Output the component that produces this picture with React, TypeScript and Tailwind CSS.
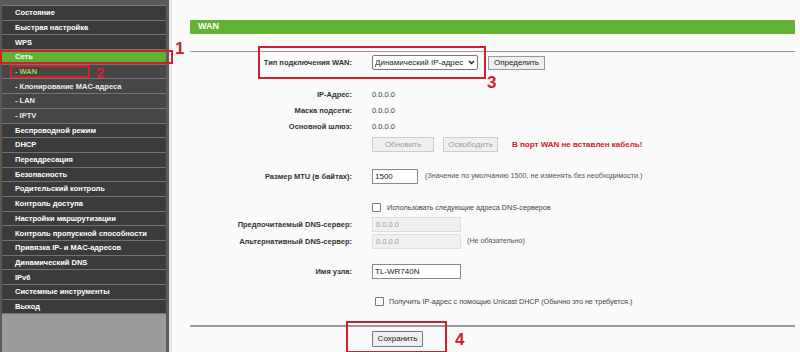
import React from "react";

const menu: { t: string; sub?: boolean; active?: boolean; sel?: boolean }[] = [
  { t: "Состояние" },
  { t: "Быстрая настройка" },
  { t: "WPS" },
  { t: "Сеть", active: true },
  { t: "- WAN", sub: true, sel: true },
  { t: "- Клонирование MAC-адреса", sub: true },
  { t: "- LAN", sub: true },
  { t: "- IPTV", sub: true },
  { t: "Беспроводной режим" },
  { t: "DHCP" },
  { t: "Переадресация" },
  { t: "Безопасность" },
  { t: "Родительский контроль" },
  { t: "Контроль доступа" },
  { t: "Настройки маршрутизации" },
  { t: "Контроль пропускной способности" },
  { t: "Привязка IP- и MAC-адресов" },
  { t: "Динамический DNS" },
  { t: "IPv6" },
  { t: "Системные инструменты" },
  { t: "Выход" },
];

function Row({ label, h, mt, children }: { label?: string; h: string; mt: string; children?: React.ReactNode }) {
  return (
    <div className={`flex items-center ${h} ${mt}`}>
      <div className="w-[162px] text-right font-bold text-[7.5px] text-[#333] shrink-0 whitespace-nowrap">{label}</div>
      <div className="pl-[20px] flex items-center text-[7.5px] text-[#444] whitespace-nowrap">{children}</div>
    </div>
  );
}

export default function App() {
  return (
    <div className="relative w-[800px] h-[352px] flex bg-[#fafafa] overflow-hidden" style={{ fontFamily: '"Liberation Sans", Arial, sans-serif' }}>
      {/* SIDEBAR */}
      <div className="w-[166px] shrink-0 flex flex-col bg-[#9b9b9b] border-l-2 border-[#5a5a5a]">
        <div className="h-[6px] bg-[#5a5a5a] border-b border-[#7a7a7a]"></div>
        {menu.map((m) => (
          <div
            key={m.t}
            className={`h-[14.7px] shrink-0 flex items-center pl-[13px] border-b border-[#747474] text-[7.5px] font-bold whitespace-nowrap ${
              m.active ? "bg-[#5db333] text-white" : m.sub ? "bg-[#464646]" : "bg-[#3b3b3b] text-white"
            } ${m.sel ? "text-[#9ad35a]" : m.sub ? "text-[#ececec]" : ""}`}
          >
            {m.t}
          </div>
        ))}
        <div className="flex-1"></div>
      </div>
      <div className="w-[3px] shrink-0 bg-[#5c5c5c]"></div>
      <div className="w-[3px] shrink-0 bg-[#e6e6e6]"></div>

      {/* CONTENT */}
      <div className="flex-1 flex flex-col pl-[18px] pr-[5px]">
        <div className="mt-[20px] h-[14px] bg-[#62b334] flex items-center pl-[8px] text-white font-bold text-[9px] rounded-[1px]">WAN</div>
        <div className="mt-[17px] h-px bg-[#8fa0a0]"></div>

        <Row label="Тип подключения WAN:" h="h-[15px]" mt="mt-[3px]">
          <div className="w-[106px] h-[15px] border border-[#777] bg-white flex items-center justify-between px-[2px] text-[8px] text-[#222] rounded-[2px] whitespace-nowrap">
            <span>Динамический IP-адрес</span>
            <svg width="7" height="5" viewBox="0 0 7 5"><path d="M1 1 L3.5 3.5 L6 1" stroke="#222" strokeWidth="1.4" fill="none" /></svg>
          </div>
          <div className="ml-[10px] h-[14px] w-[57px] border border-[#999] bg-[#efefef] flex items-center justify-center text-[8px] text-[#222]">Определить</div>
        </Row>

        <Row label="IP-Адрес:" h="h-[16px]" mt="mt-[17px]">0.0.0.0</Row>
        <Row label="Маска подсети:" h="h-[16px]" mt="mt-0">0.0.0.0</Row>
        <Row label="Основной шлюз:" h="h-[16px]" mt="mt-0">0.0.0.0</Row>
        <Row h="h-[15px]" mt="mt-[2px]">
          <div className="w-[62px] h-[15px] border border-[#ccc] bg-[#f0f0f0] flex items-center justify-center text-[8px] text-[#999]">Обновить</div>
          <div className="ml-[9px] w-[55px] h-[15px] border border-[#ccc] bg-[#f0f0f0] flex items-center justify-center text-[8px] text-[#999]">Освободить</div>
          <span className="ml-[14px] text-[#d0202a] font-bold text-[8px]">В порт WAN не вставлен кабель!</span>
        </Row>

        <Row label="Размер MTU (в байтах):" h="h-[15px]" mt="mt-[17px]">
          <div className="w-[46px] h-[15px] border border-[#888] bg-white flex items-center px-[2px] text-[8px] text-[#222]">1500</div>
          <span className="ml-[7px] text-[7.2px] text-[#555]">(Значение по умолчанию 1500, не изменять без необходимости.)</span>
        </Row>

        <Row h="h-[14px]" mt="mt-[17px]">
          <div className="w-[9px] h-[9px] border border-[#777] bg-white rounded-[1px]"></div>
          <span className="ml-[6px] text-[7.2px] text-[#444]">Использовать следующие адреса DNS-серверов</span>
        </Row>
        <Row label="Предпочитаемый DNS-сервер:" h="h-[15px]" mt="mt-[2px]">
          <div className="w-[89px] h-[15px] border border-[#ddd] bg-[#f0f0f0] flex items-center px-[3px] text-[7.5px] text-[#999]">0.0.0.0</div>
        </Row>
        <Row label="Альтернативный DNS-сервер:" h="h-[15px]" mt="mt-[2px]">
          <div className="w-[89px] h-[15px] border border-[#ddd] bg-[#f0f0f0] flex items-center px-[3px] text-[7.5px] text-[#999]">0.0.0.0</div>
          <span className="ml-[6px] text-[7.2px] text-[#555]">(Не обязательно)</span>
        </Row>

        <Row label="Имя узла:" h="h-[15px]" mt="mt-[15px]">
          <div className="w-[89px] h-[15px] border border-[#888] bg-white flex items-center px-[2px] text-[8px] text-[#222]">TL-WR740N</div>
        </Row>

        <Row h="h-[14px]" mt="mt-[16px]">
          <div className="ml-[3px] w-[9px] h-[9px] border border-[#777] bg-white rounded-[1px]"></div>
          <span className="ml-[5px] text-[7.2px] text-[#444]">Получить IP-адрес с помощью Unicast DHCP (Обычно это не требуется.)</span>
        </Row>

        <div className="mt-[16px] h-[2px] bg-[#8fa0a0]"></div>
        <div className="mt-[4px] flex">
          <div className="ml-[182px] w-[51px] h-[16px] border border-[#777] bg-[#efefef] flex items-center justify-center text-[8px] text-[#222] rounded-[1px]">Сохранить</div>
        </div>
      </div>

      {/* ANNOTATIONS */}
      <div className="absolute left-0 top-[50px] w-[173px] h-[14px] border-2 border-[#d0202a]"></div>
      <div className="absolute left-[175px] top-[36px] text-[#d0202a] text-[17px] font-semibold">1</div>
      <div className="absolute left-[10px] top-[65px] w-[80px] h-[13px] border-2 border-[#d0202a]"></div>
      <div className="absolute left-[96px] top-[62px] text-[#d0202a] text-[15px] font-bold">2</div>
      <div className="absolute left-[258px] top-[46px] w-[228px] h-[33px] border-2 border-[#d0202a]"></div>
      <div className="absolute left-[487px] top-[70px] text-[#d0202a] text-[17px] font-semibold">3</div>
      <div className="absolute left-[346px] top-[321px] w-[101px] h-[32px] border-2 border-[#d0202a]"></div>
      <div className="absolute left-[455px] top-[327px] text-[#d0202a] text-[17px] font-bold">4</div>
    </div>
  );
}
